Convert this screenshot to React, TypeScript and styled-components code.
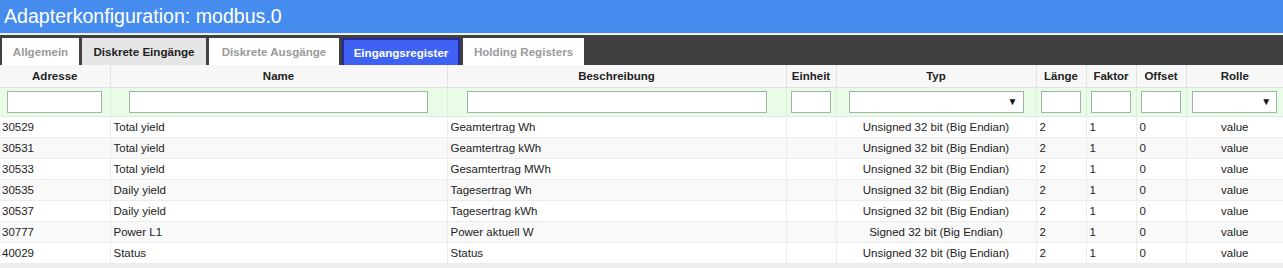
import styled, { createGlobalStyle } from 'styled-components';

const GlobalStyle = createGlobalStyle`
  html, body {
    margin: 0;
    padding: 0;
    background: #fff;
    font-family: "Liberation Sans", Arial, sans-serif;
  }
`;

type Column = {
  key: string;
  title: string;
  width: number;
  filter: 'input' | 'select';
  inputWidth: number;
  align: 'left' | 'center';
};

const columns: Column[] = [
  { key: 'address', title: 'Adresse', width: 110, filter: 'input', inputWidth: 95, align: 'left' },
  { key: 'name', title: 'Name', width: 337, filter: 'input', inputWidth: 299, align: 'left' },
  { key: 'description', title: 'Beschreibung', width: 339, filter: 'input', inputWidth: 300, align: 'left' },
  { key: 'unit', title: 'Einheit', width: 50, filter: 'input', inputWidth: 40, align: 'left' },
  { key: 'type', title: 'Typ', width: 200, filter: 'select', inputWidth: 175, align: 'center' },
  { key: 'len', title: 'Länge', width: 50, filter: 'input', inputWidth: 40, align: 'left' },
  { key: 'factor', title: 'Faktor', width: 50, filter: 'input', inputWidth: 40, align: 'left' },
  { key: 'offset', title: 'Offset', width: 50, filter: 'input', inputWidth: 40, align: 'left' },
  { key: 'role', title: 'Rolle', width: 97, filter: 'select', inputWidth: 85, align: 'center' },
];

const rows = [
  { address: '30529', name: 'Total yield', description: 'Geamtertrag Wh', unit: '', type: 'Unsigned 32 bit (Big Endian)', len: '2', factor: '1', offset: '0', role: 'value' },
  { address: '30531', name: 'Total yield', description: 'Geamtertrag kWh', unit: '', type: 'Unsigned 32 bit (Big Endian)', len: '2', factor: '1', offset: '0', role: 'value' },
  { address: '30533', name: 'Total yield', description: 'Gesamtertrag MWh', unit: '', type: 'Unsigned 32 bit (Big Endian)', len: '2', factor: '1', offset: '0', role: 'value' },
  { address: '30535', name: 'Daily yield', description: 'Tagesertrag Wh', unit: '', type: 'Unsigned 32 bit (Big Endian)', len: '2', factor: '1', offset: '0', role: 'value' },
  { address: '30537', name: 'Daily yield', description: 'Tagesertrag kWh', unit: '', type: 'Unsigned 32 bit (Big Endian)', len: '2', factor: '1', offset: '0', role: 'value' },
  { address: '30777', name: 'Power L1', description: 'Power aktuell W', unit: '', type: 'Signed 32 bit (Big Endian)', len: '2', factor: '1', offset: '0', role: 'value' },
  { address: '40029', name: 'Status', description: 'Status', unit: '', type: 'Unsigned 32 bit (Big Endian)', len: '2', factor: '1', offset: '0', role: 'value' },
];

type TabKind = 'plain' | 'visited' | 'active';

const tabs: { label: string; kind: TabKind; width: number }[] = [
  { label: 'Allgemein', kind: 'plain', width: 77 },
  { label: 'Diskrete Eingänge', kind: 'visited', width: 124 },
  { label: 'Diskrete Ausgänge', kind: 'plain', width: 130 },
  { label: 'Eingangsregister', kind: 'active', width: 118 },
  { label: 'Holding Registers', kind: 'plain', width: 121 },
];

const App = () => {
  return (
    <>
      <GlobalStyle />
      <Page>
        <TitleBar>Adapterkonfiguration: modbus.0</TitleBar>
        <TabBar>
          {tabs.map((tab) => (
            <Tab key={tab.label} $kind={tab.kind} $width={tab.width}>
              {tab.label}
            </Tab>
          ))}
        </TabBar>
        <Table>
          <colgroup>
            {columns.map((col) => (
              <col key={col.key} style={{ width: col.width }} />
            ))}
          </colgroup>
          <thead>
            <tr>
              {columns.map((col) => (
                <HeadCell key={col.key}>{col.title}</HeadCell>
              ))}
            </tr>
            <FilterRow>
              {columns.map((col) => (
                <FilterCell key={col.key}>
                  {col.filter === 'input' ? (
                    <FilterInput $width={col.inputWidth} />
                  ) : (
                    <FilterSelect $width={col.inputWidth}>
                      <Arrow>▼</Arrow>
                    </FilterSelect>
                  )}
                </FilterCell>
              ))}
            </FilterRow>
          </thead>
          <tbody>
            {rows.map((row, index) => (
              <DataRow key={row.address} $odd={index % 2 === 1}>
                {columns.map((col) => (
                  <DataCell key={col.key} $align={col.align}>
                    {row[col.key as keyof typeof row]}
                  </DataCell>
                ))}
              </DataRow>
            ))}
          </tbody>
        </Table>
        <Footer />
      </Page>
    </>
  );
};

export default App;

const Page = styled.div`
  width: 1283px;
  height: 268px;
  overflow: hidden;
  display: flex;
  flex-direction: column;
`;

const TitleBar = styled.div`
  height: 33px;
  line-height: 33px;
  padding-left: 4px;
  background-color: #468cee;
  color: #fff;
  font-size: 19.6px;
  border-bottom: 2px solid #eef2f7;
`;

const TabBar = styled.div`
  height: 30px;
  box-sizing: border-box;
  padding: 3px 0 0 2px;
  display: flex;
  align-items: stretch;
  gap: 3px;
  background-color: #404040;
`;

const Tab = styled.div<{ $kind: TabKind; $width: number }>`
  width: ${(p) => p.$width}px;
  box-sizing: border-box;
  display: flex;
  align-items: center;
  justify-content: center;
  font-size: 11.6px;
  font-weight: bold;
  color: ${(p) => (p.$kind === 'active' ? '#fff' : p.$kind === 'visited' ? '#222' : '#9a9a9a')};
  background-color: ${(p) => (p.$kind === 'active' ? '#3e63f3' : p.$kind === 'visited' ? '#e6e6e6' : '#fff')};
  border: ${(p) => (p.$kind === 'active' ? '2px solid #28289a' : 'none')};
  border-bottom: none;
`;

const Table = styled.table`
  width: 1283px;
  table-layout: fixed;
  border-collapse: collapse;
  font-size: 11.5px;
  color: #222;
`;

const HeadCell = styled.th`
  height: 22px;
  padding: 0;
  text-align: center;
  font-weight: bold;
  background-color: #f7f7f7;
  border-left: 1px solid #e2e2e2;
  border-bottom: 1px solid #e2e2e2;

  &:first-child {
    border-left: none;
  }
`;

const FilterRow = styled.tr`
  background-color: #e8fce8;
`;

const FilterCell = styled.td`
  height: 28px;
  padding: 0;
  text-align: center;
  border-left: 1px solid #dcf0dc;
  border-bottom: 1px solid #dcecdc;

  &:first-child {
    border-left: none;
  }
`;

const FilterInput = styled.input`
  display: inline-block;
  vertical-align: middle;
  width: ${(p: { $width: number }) => p.$width}px;
  height: 22px;
  box-sizing: border-box;
  margin: 0;
  border: 1px solid #a2b4a2;
  background: #fff;
  outline: none;
`;

const FilterSelect = styled.div<{ $width: number }>`
  position: relative;
  display: inline-block;
  vertical-align: middle;
  width: ${(p) => p.$width}px;
  height: 22px;
  box-sizing: border-box;
  border: 1px solid #a2b4a2;
  background: #fff;
`;

const Arrow = styled.span`
  position: absolute;
  right: 5px;
  top: 4px;
  font-size: 10px;
  color: #111;
`;

const DataRow = styled.tr<{ $odd: boolean }>`
  background-color: ${(p) => (p.$odd ? '#f9f9f9' : '#fff')};
`;

const DataCell = styled.td<{ $align: 'left' | 'center' }>`
  height: 20px;
  padding: 0 3px;
  text-align: ${(p) => p.$align};
  white-space: nowrap;
  overflow: hidden;
  border-left: 1px solid #ececec;
  border-bottom: 1px solid #ececec;

  &:first-child {
    border-left: none;
    padding-left: 2px;
  }
`;

const Footer = styled.div`
  flex: 1;
  background-color: #eeeeee;
`;
